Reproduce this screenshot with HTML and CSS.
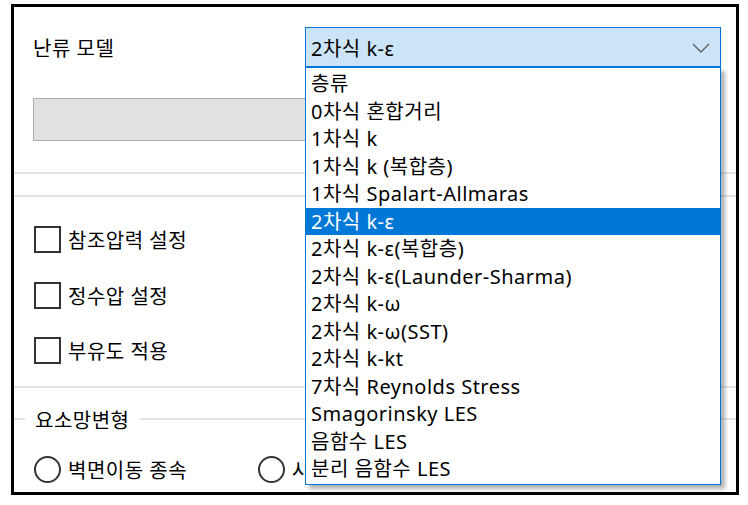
FILE: index.html
```html
<!DOCTYPE html>
<html lang="ko">
<head>
    <meta charset="UTF-8">
    <title>난류 모델</title>
    <link rel="stylesheet" href="styles.css">
</head>
<body>
    <div class="frame">
        <div class="row model">
            <span class="label">난류 모델</span>
            <div class="combo">
                <span class="value">2차식 k-ε</span>
                <svg class="chev" width="18" height="10" viewBox="0 0 18 10">
                    <path d="M1 1 L9 9 L17 1" fill="none" stroke="#5f5f5f" stroke-width="1.4"/>
                </svg>
                <ul class="list">
                    <li>층류</li>
                    <li>0차식 혼합거리</li>
                    <li>1차식 k</li>
                    <li>1차식 k (복합층)</li>
                    <li>1차식 Spalart-Allmaras</li>
                    <li class="sel">2차식 k-ε</li>
                    <li>2차식 k-ε(복합층)</li>
                    <li>2차식 k-ε(Launder-Sharma)</li>
                    <li>2차식 k-ω</li>
                    <li>2차식 k-ω(SST)</li>
                    <li>2차식 k-kt</li>
                    <li>7차식 Reynolds Stress</li>
                    <li>Smagorinsky LES</li>
                    <li>음함수 LES</li>
                    <li>분리 음함수 LES</li>
                </ul>
            </div>
        </div>

        <div class="row">
            <div class="btn"></div>
        </div>

        <div class="sep first"></div>
        <div class="sep second"></div>

        <div class="checks">
            <label class="check"><span class="box"></span>참조압력 설정</label>
            <label class="check"><span class="box"></span>정수압 설정</label>
            <label class="check"><span class="box"></span>부유도 적용</label>
        </div>

        <div class="sep third"></div>

        <div class="group">
            <div class="legend">요소망변형</div>
            <div class="radios">
                <label class="radio"><span class="dot"></span>벽면이동 종속</label>
                <label class="radio"><span class="dot"></span>사용자 정의</label>
            </div>
        </div>
    </div>
</body>
</html>
```

FILE: styles.css
```css
* {
    margin: 0;
    padding: 0;
    box-sizing: border-box;
}

body {
    background-color: white;
    font-family: 'Noto Sans', 'Noto Sans CJK KR', sans-serif;
    font-size: 20px;
    letter-spacing: 0.5px;
    color: black;
}

.frame {
    margin: 4px 0 0 11px;
    width: 728px;
    height: 491px;
    border: 3px solid black;
    background-color: white;
    overflow: hidden;
    position: relative;
}

.row {
    display: flex;
    align-items: center;
    padding: 0 15px 0 19px;
}

.model {
    padding-top: 20px;
}

.label {
    flex: 1;
}

.combo {
    position: relative;
    width: 416px;
    height: 40px;
    border: 1px solid #0078d7;
    background-color: #cce4f7;
    display: flex;
    align-items: center;
    padding-left: 5px;
}

.value {
    flex: 1;
    margin-top: 1px;
}

.chev {
    margin-right: 10px;
    margin-top: 1px;
}

.list {
    list-style: none;
    position: absolute;
    top: 39px;
    left: -1px;
    width: 416px;
    height: 418px;
    border: 1px solid #0078d7;
    background-color: white;
    padding-top: 2px;
    box-shadow: 4px 4px 4px rgba(0, 0, 0, 0.3);
    z-index: 2;
}

.list li {
    height: 27.5px;
    line-height: 28px;
    padding-left: 5px;
    white-space: nowrap;
}

.list .sel {
    background-color: #0078d7;
    color: white;
}

.btn {
    margin-top: 31px;
    flex: 1;
    height: 43px;
    border: 1px solid #adadad;
    background-color: #e1e1e1;
}

.sep {
    height: 2px;
    background-color: #e3e3e3;
}

.sep.first {
    margin-top: 31px;
}

.sep.second {
    margin-top: 21px;
}

.sep.third {
    margin-top: 22px;
}

.checks {
    display: flex;
    flex-direction: column;
    gap: 28.5px;
    padding: 29px 0 0 20px;
}

.check, .radio {
    display: flex;
    align-items: center;
    gap: 7px;
    height: 27px;
}

.box {
    width: 27px;
    height: 27px;
    border: 2px solid #333;
    background-color: white;
}

.group {
    padding-top: 20px;
}

.legend {
    display: flex;
    align-items: center;
    gap: 10px;
    height: 22px;
}

.legend::before,
.legend::after {
    content: '';
    height: 2px;
    background-color: #e3e3e3;
}

.legend::before {
    width: 11px;
}

.legend::after {
    flex: 1;
}

.radios {
    display: flex;
    padding: 26px 0 0 20px;
}

.radio {
    width: 224px;
}

.dot {
    width: 27px;
    height: 27px;
    border: 2px solid #333;
    border-radius: 50%;
    background-color: white;
}
```
